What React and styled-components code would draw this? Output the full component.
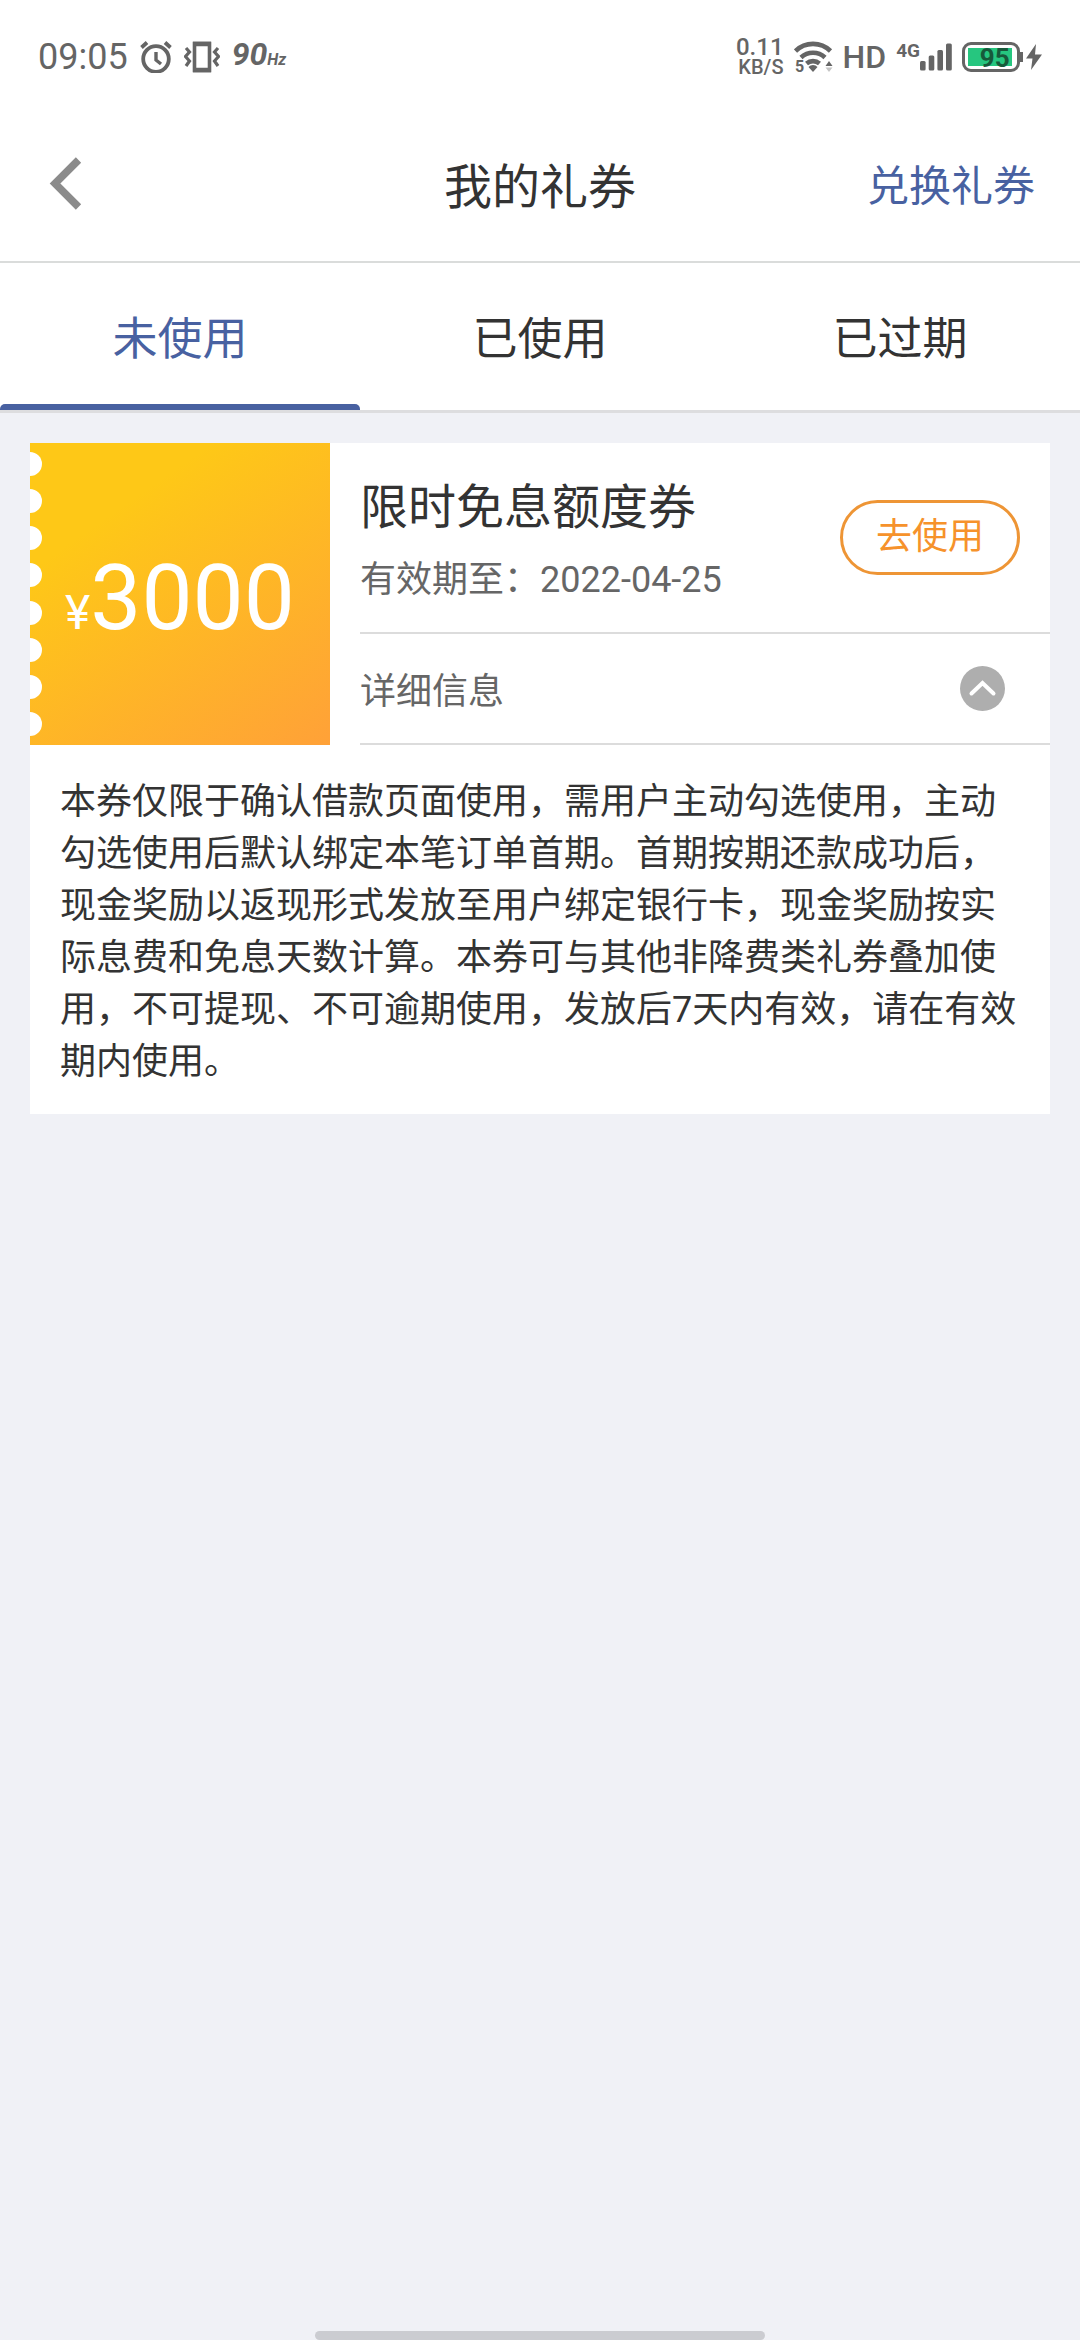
import React, { useState } from "react";
import styled, { createGlobalStyle } from "styled-components";

const GlobalStyle = createGlobalStyle`
  * {
    box-sizing: border-box;
  }
  body {
    margin: 0;
    background: #f0f1f6;
    color: #333;
    font-family: Roboto, "Noto Sans CJK SC", sans-serif;
  }
  button {
    font-family: inherit;
    padding: 0;
    border: 0;
    background: none;
    cursor: pointer;
  }
  h1, h2, p {
    margin: 0;
    font-weight: 400;
  }
`;

const Page = styled.div`
  display: flex;
  flex-direction: column;
  min-height: 100vh;
`;

/* ---------- status bar ---------- */

const StatusBar = styled.div`
  display: flex;
  justify-content: space-between;
  align-items: center;
  height: 105px;
  padding: 8px 38px 0;
  background: #fff;
  color: #656565;
`;

const StatusGroup = styled.div`
  display: flex;
  align-items: center;
  gap: ${(props) => props.$gap}px;
`;

const Clock = styled.span`
  font-size: 36px;
  line-height: 36px;
`;

const Rate = styled.span`
  display: flex;
  align-items: baseline;
  font-size: 32px;
  font-style: italic;
  font-weight: 700;
  line-height: 36px;

  small {
    font-size: 16px;
  }
`;

const Speed = styled.span`
  display: flex;
  flex-direction: column;
  align-items: flex-end;
  font-size: 24px;
  font-weight: 500;
  line-height: 20px;

  small {
    font-size: 20px;
  }
`;

const Hd = styled.span`
  font-size: 32px;
  font-weight: 500;
  line-height: 36px;
`;

const Signal = styled.span`
  display: flex;
  align-items: flex-start;
  font-size: 19px;
  font-weight: 700;
  line-height: 16px;
`;

const BatteryWrap = styled.span`
  display: flex;
  align-items: center;
`;

const Battery = styled.span`
  width: 58px;
  height: 30px;
  padding: 3px;
  border: 3px solid #656565;
  border-radius: 9px;
`;

const Charge = styled.span`
  display: flex;
  justify-content: flex-end;
  height: 18px;
  padding-right: 2px;
  background: #26c67f;
  color: #17593a;
  font-size: 26px;
  font-weight: 700;
  line-height: 20px;
`;

const BatteryTip = styled.span`
  width: 3px;
  height: 10px;
  margin-right: 3px;
  background: #656565;
`;

/* ---------- header and tabs ---------- */

const Header = styled.header`
  display: grid;
  grid-template-columns: 1fr auto 1fr;
  align-items: center;
  height: 158px;
  padding: 0 45px;
  border-bottom: 2px solid #dadcdb;
  background: #fff;
  font-family: "Noto Sans CJK SC", sans-serif;
`;

const BackButton = styled.button`
  display: flex;
  justify-self: start;
`;

const Title = styled.h1`
  font-size: 48px;
  line-height: 72px;
`;

const HeaderLink = styled.a`
  justify-self: end;
  color: #4861a1;
  font-size: 42px;
  line-height: 72px;
  text-decoration: none;
`;

const Tabs = styled.nav`
  display: flex;
  border-bottom: 3px solid #dddddf;
  background: #fff;
`;

const Tab = styled.button`
  position: relative;
  flex: 1;
  height: 147px;
  color: ${(props) => (props.$active ? "#4861a1" : "#333")};
  font-size: 45px;
  line-height: 72px;
  && {
    padding-top: 6px;
  }

  &::after {
    content: "";
    display: ${(props) => (props.$active ? "block" : "none")};
    position: absolute;
    right: 0;
    bottom: 0;
    left: 0;
    height: 6px;
    border-radius: 5px 5px 0 0;
    background: #4861a1;
  }
`;

/* ---------- coupon ---------- */

const List = styled.main`
  display: flex;
  flex-direction: column;
  gap: 30px;
  padding: 30px;
`;

const Card = styled.article`
  background: #fff;
`;

const CardTop = styled.div`
  display: flex;
  gap: 30px;
`;

const Ticket = styled.div`
  display: flex;
  width: 300px;
  background: linear-gradient(145deg, #fec817 25%, #ffa138 100%);
`;

const Holes = styled.div`
  display: flex;
  flex-direction: column;
  justify-content: space-between;
  padding: 9px 0;
`;

const Hole = styled.span`
  width: 12px;
  height: 24px;
  border-radius: 0 12px 12px 0;
  background: #fff;
`;

const Amount = styled.div`
  display: flex;
  flex: 1;
  justify-content: center;
  align-items: baseline;
  padding: 98px 12px 0 0;
  color: #fff;
  font-size: 91px;
  line-height: 114px;

  small {
    font-size: 48px;
  }
`;

const Info = styled.div`
  flex: 1;
`;

const InfoRow = styled.div`
  display: flex;
  justify-content: space-between;
  align-items: center;
  padding: ${(props) => props.$pad};
  border-bottom: 2px solid #dcdcdc;
`;

const Summary = styled.div`
  padding-top: 14px;
`;

const CouponName = styled.h2`
  font-size: 48px;
  line-height: 72px;
`;

const Muted = styled.p`
  color: #666;
  font-size: 36px;
  line-height: 73px;
`;

const DetailLabel = styled(Muted)`
  font-family: "Noto Sans CJK SC", sans-serif;
`;

const UseButton = styled.button`
  width: 180px;
  height: 75px;
  && {
    border: 3px solid #ee9535;
  }
  border-radius: 38px;
  color: #f6922b;
  font-size: 36px;
  line-height: 69px;
`;

const Toggle = styled.button`
  display: flex;
  transform: ${(props) => (props.$open ? "none" : "rotate(180deg)")};
`;

const Detail = styled.p`
  padding: 31px 30px 26px;
  font-size: 36px;
  line-height: 52px;
`;

const HomeBar = styled.div`
  width: 450px;
  height: 9px;
  margin: auto auto 0;
  border-radius: 5px;
  background: #cbccd1;
`;

/* ---------- icons ---------- */

const AlarmIcon = () => (
  <svg width="32" height="32" viewBox="0 0 32 32" fill="none" stroke="#656565">
    <circle cx="16" cy="18" r="12.8" strokeWidth="3.8" />
    <path d="M16 11v8l5 4" strokeWidth="3.4" />
    <path d="M1.5 6.5 7 1.5M30.5 6.5 25 1.5" strokeWidth="3.8" />
  </svg>
);

const VibrateIcon = () => (
  <svg width="36" height="32" viewBox="0 0 36 32" fill="none" stroke="#656565">
    <rect x="10.5" y="2.5" width="15" height="27" strokeWidth="3.6" />
    <path d="M9 3h18M9 29h18" strokeWidth="4.6" />
    <path
      d="M2 7 5.5 11 1.5 15.5 5.5 20 2 25M34 7 30.5 11l4 4.5-4 4.5 3.5 5"
      strokeWidth="3.2"
    />
  </svg>
);

const WifiIcon = () => (
  <svg width="39" height="40" viewBox="0 -4 39 40" fill="none" stroke="#656565">
    <path d="M1.5 10a25 25 0 0 1 35 0" strokeWidth="4.6" />
    <path d="M7 16.5a17.5 17.5 0 0 1 24 0" strokeWidth="4.6" />
    <path d="M12.5 22.5a10 10 0 0 1 13 0" strokeWidth="4.6" />
    <path d="M19 31l-4.5-5a6 6 0 0 1 9 0z" fill="#656565" stroke="none" />
    <path d="M31.5 25l3.5-5 3.5 5z" fill="#656565" stroke="none" />
    <path d="M31.5 26.5h7L35 31z" fill="#c4c4c4" stroke="none" />
    <text x="1" y="31" fill="#656565" stroke="none" fontSize="16" fontWeight="700">5</text>
  </svg>
);

const BarsIcon = () => (
  <svg width="32" height="28" viewBox="0 0 32 28" fill="#656565">
    <rect x="0" y="18" width="5.6" height="9.5" rx="1.5" />
    <rect x="8.7" y="12.5" width="5.6" height="15" rx="1.5" />
    <rect x="17.4" y="7" width="5.6" height="20.5" rx="1.5" />
    <rect x="26" y="0.5" width="5.8" height="27" rx="1.5" />
  </svg>
);

const BoltIcon = () => (
  <svg width="16" height="26" viewBox="0 0 16 26" fill="#656565">
    <path d="M10 0 0 14.5h6.5L5 26 16 10.5H9z" />
  </svg>
);

const BackIcon = () => (
  <svg width="42" height="54" viewBox="0 0 42 54" fill="none">
    <path d="M33.5 4 10 27.5 33.5 51" stroke="#8b8b8b" strokeWidth="7.5" />
  </svg>
);

const UpIcon = () => (
  <svg width="45" height="45" viewBox="0 0 45 45" fill="none">
    <circle cx="22.5" cy="22.5" r="22.5" fill="#aeaeae" />
    <path d="M11.5 27.5 22.5 17l11 10.5" stroke="#fff" strokeWidth="4" strokeLinecap="round" />
  </svg>
);

const tabs = ["未使用", "已使用", "已过期"];

const coupons = [
  {
    id: 1,
    amount: 3000,
    name: "限时免息额度券",
    expires: "2022-04-25",
    detail:
      "本券仅限于确认借款页面使用，需用户主动勾选使用，主动勾选使用后默认绑定本笔订单首期。首期按期还款成功后，现金奖励以返现形式发放至用户绑定银行卡，现金奖励按实际息费和免息天数计算。本券可与其他非降费类礼券叠加使用，不可提现、不可逾期使用，发放后7天内有效，请在有效期内使用。",
  },
];

function Coupon({ coupon }) {
  const [open, setOpen] = useState(true);

  return (
    <Card>
      <CardTop>
        <Ticket>
          <Holes>
            {[...Array(8)].map((_, i) => (
              <Hole key={i} />
            ))}
          </Holes>
          <Amount>
            <small>¥</small>
            {coupon.amount}
          </Amount>
        </Ticket>
        <Info>
          <InfoRow $pad="15px 30px 15px 0">
            <Summary>
              <CouponName>{coupon.name}</CouponName>
              <Muted>有效期至：{coupon.expires}</Muted>
            </Summary>
            <UseButton>去使用</UseButton>
          </InfoRow>
          <InfoRow $pad="18px 45px 18px 0">
            <DetailLabel>详细信息</DetailLabel>
            <Toggle $open={open} aria-label="详细信息" aria-expanded={open} onClick={() => setOpen(!open)}>
              <UpIcon />
            </Toggle>
          </InfoRow>
        </Info>
      </CardTop>
      {open && <Detail>{coupon.detail}</Detail>}
    </Card>
  );
}

export default function App() {
  const [active, setActive] = useState(0);

  return (
    <Page>
      <GlobalStyle />
      <StatusBar>
        <StatusGroup $gap={12}>
          <Clock>09:05</Clock>
          <AlarmIcon />
          <VibrateIcon />
          <Rate>
            90<small>Hz</small>
          </Rate>
        </StatusGroup>
        <StatusGroup $gap={10}>
          <Speed>
            0.11<small>KB/S</small>
          </Speed>
          <WifiIcon />
          <Hd>HD</Hd>
          <Signal>
            4G
            <BarsIcon />
          </Signal>
          <BatteryWrap>
            <Battery>
              <Charge style={{ width: "95%" }}>95</Charge>
            </Battery>
            <BatteryTip />
            <BoltIcon />
          </BatteryWrap>
        </StatusGroup>
      </StatusBar>

      <Header>
        <BackButton aria-label="返回">
          <BackIcon />
        </BackButton>
        <Title>我的礼券</Title>
        <HeaderLink href="#redeem">兑换礼券</HeaderLink>
      </Header>

      <Tabs>
        {tabs.map((name, i) => (
          <Tab key={name} $active={i === active} onClick={() => setActive(i)}>
            {name}
          </Tab>
        ))}
      </Tabs>

      <List>
        {active === 0 && coupons.map((c) => <Coupon key={c.id} coupon={c} />)}
      </List>

      <HomeBar />
    </Page>
  );
}
